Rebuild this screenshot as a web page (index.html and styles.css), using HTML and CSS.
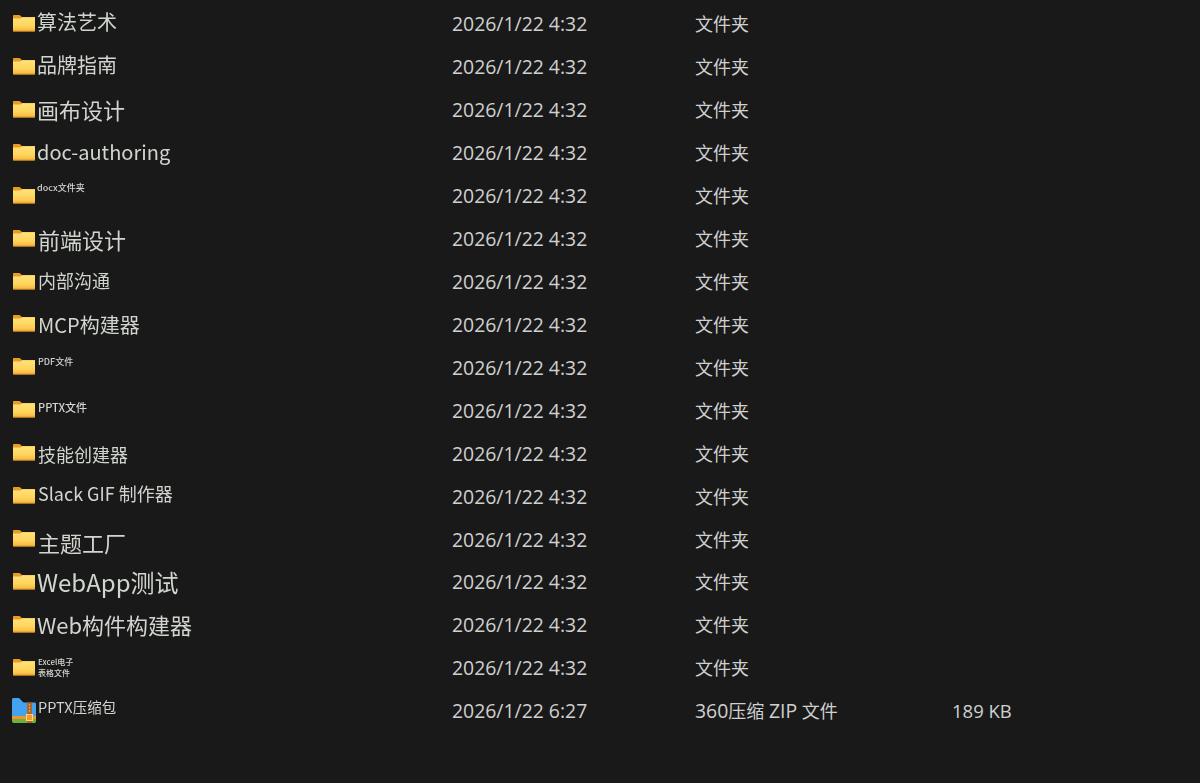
FILE: index.html
```html
<!DOCTYPE html>
<html lang="zh-CN">
<head>
<meta charset="utf-8">
<title>文件列表</title>
<link rel="stylesheet" href="styles.css">
</head>
<body>
<svg class="defs" width="0" height="0" aria-hidden="true">
  <defs>
    <linearGradient id="fg" x1="0" y1="0" x2="0" y2="1">
      <stop offset="0" stop-color="#ffe27a"/>
      <stop offset="0.6" stop-color="#ffd45c"/>
      <stop offset="1" stop-color="#f7b43c"/>
    </linearGradient>
    <symbol id="folder" viewBox="0 0 24 18">
      <path d="M1 2C1 1.400 1.400 1 2 1H7.500L10 3H23V8H1Z" fill="#e89c24"/>
      <path d="M1 4.500H8.500L10.500 3.300H23V16.500C23 17.100 22.600 17.500 22 17.500H2C1.400 17.500 1 17.100 1 16.500Z" fill="url(#fg)"/>
      <path d="M1 16.700H23V17.500H1Z" fill="#c58522"/>
    </symbol>
    <symbol id="zip" viewBox="0 0 24 26">
      <path d="M0 1.500C0 .7.700 0 1.500 0H7L11.500 4.500H22.500C23.400 4.500 24 5.200 24 6V18H0Z" fill="#43a3ef"/>
      <path d="M0 18H24V21H0Z" fill="#f0962c"/>
      <path d="M0 21H24V23C24 24.300 23.300 25 22.500 25H1.500C.7 25 0 24.300 0 23Z" fill="#6fb13c"/>
      <path d="M15 4.500H20V25H15Z" fill="#b0652a"/>
      <path d="M17.500 6v1.500M17.500 9v1.500M17.500 12v1.500" stroke="#f0b050" stroke-width="1.200"/>
      <rect x="14.500" y="16.500" width="6" height="6" fill="#f29a30" stroke="#ffd878" stroke-width="1"/>
    </symbol>
  </defs>
</svg>
<main class="list">
  <div class="row"><div class="name"><svg class="ico"><use href="#folder"/></svg><span class="lbl s20 m8">算法艺术</span></div><div class="date">2026/1/22 4:32</div><div class="type">文件夹</div></div>
  <div class="row"><div class="name"><svg class="ico"><use href="#folder"/></svg><span class="lbl s20 m8">品牌指南</span></div><div class="date">2026/1/22 4:32</div><div class="type">文件夹</div></div>
  <div class="row"><div class="name"><svg class="ico"><use href="#folder"/></svg><span class="lbl s22 m8">画布设计</span></div><div class="date">2026/1/22 4:32</div><div class="type">文件夹</div></div>
  <div class="row"><div class="name"><svg class="ico"><use href="#folder"/></svg><span class="lbl s20 m9">doc-authoring</span></div><div class="date">2026/1/22 4:32</div><div class="type">文件夹</div></div>
  <div class="row"><div class="name"><svg class="ico"><use href="#folder"/></svg><span class="lbl s9 m8">docx文件夹</span></div><div class="date">2026/1/22 4:32</div><div class="type">文件夹</div></div>
  <div class="row"><div class="name"><svg class="ico"><use href="#folder"/></svg><span class="lbl s22 m9 n1">前端设计</span></div><div class="date">2026/1/22 4:32</div><div class="type">文件夹</div></div>
  <div class="row"><div class="name"><svg class="ico"><use href="#folder"/></svg><span class="lbl s18 m9 n1">内部沟通</span></div><div class="date">2026/1/22 4:32</div><div class="type">文件夹</div></div>
  <div class="row"><div class="name"><svg class="ico"><use href="#folder"/></svg><span class="lbl s20 m11 n1">MCP构建器</span></div><div class="date">2026/1/22 4:32</div><div class="type">文件夹</div></div>
  <div class="row"><div class="name"><svg class="ico"><use href="#folder"/></svg><span class="lbl s9 m11 n1">PDF文件</span></div><div class="date">2026/1/22 4:32</div><div class="type">文件夹</div></div>
  <div class="row"><div class="name"><svg class="ico"><use href="#folder"/></svg><span class="lbl s11 m13 n1">PPTX文件</span></div><div class="date">2026/1/22 4:32</div><div class="type">文件夹</div></div>
  <div class="row"><div class="name"><svg class="ico"><use href="#folder"/></svg><span class="lbl s18 m12 n1">技能创建器</span></div><div class="date">2026/1/22 4:32</div><div class="type">文件夹</div></div>
  <div class="row"><div class="name"><svg class="ico"><use href="#folder"/></svg><span class="lbl s18 m8 n1">Slack GIF 制作器</span></div><div class="date">2026/1/22 4:32</div><div class="type">文件夹</div></div>
  <div class="row"><div class="name"><svg class="ico"><use href="#folder"/></svg><span class="lbl s22 m12 n1">主题工厂</span></div><div class="date">2026/1/22 4:32</div><div class="type">文件夹</div></div>
  <div class="row"><div class="name"><svg class="ico"><use href="#folder"/></svg><span class="lbl s24 m8">WebApp测试</span></div><div class="date">2026/1/22 4:32</div><div class="type">文件夹</div></div>
  <div class="row"><div class="name"><svg class="ico"><use href="#folder"/></svg><span class="lbl s22 m8">Web构件构建器</span></div><div class="date">2026/1/22 4:32</div><div class="type">文件夹</div></div>
  <div class="row"><div class="name"><svg class="ico"><use href="#folder"/></svg><span class="lbl s8 m11 n1">Excel电子<br>表格文件</span></div><div class="date">2026/1/22 4:32</div><div class="type">文件夹</div></div>
  <div class="row"><div class="name"><svg class="ico ico-zip"><use href="#zip"/></svg><span class="lbl s15 m9 n1">PPTX压缩包</span></div><div class="date">2026/1/22 6:27</div><div class="type"><span class="latin">360</span>压缩 <span class="latin">ZIP</span> 文件</div><div class="size">189 KB</div></div>
</main>
</body>
</html>
```
FILE: styles.css
```css
html, body { margin: 0; height: 100%; }
body {
  background: #191919;
  color: #d6d6d6;
  font-family: "Noto Sans CJK SC", "Noto Sans", sans-serif;
  overflow: hidden;
}
.defs { display: block; height: 0; }
.list { padding-top: 1px; }
.row {
  display: grid;
  grid-template-columns: 452px 243px 257px 1fr;
  height: 42.93px;
  align-items: center;
  font-size: 18px;
}
.name { display: flex; align-items: flex-start; height: 42.93px; padding-left: 12px; }
.ico { width: 24px; height: 18px; margin-top: 13px; flex: none; }
.ico-zip { height: 26px; margin-top: 10px; }
.lbl { display: block; white-space: nowrap; margin-left: 1px; color: #d0d5ce; filter: blur(.35px); }
.n1 { margin-left: 2px; }
.s8 { font-size: 8px; line-height: 11px; font-weight: 500; }
.s9 { font-size: 9px; line-height: 14px; font-weight: 500; }
.s11 { font-size: 11px; line-height: 14px; font-weight: 500; }
.s15 { font-size: 14.5px; line-height: 20px; }
.s18 { font-size: 18px; line-height: 24px; }
.s20 { font-size: 20px; line-height: 26px; }
.s22 { font-size: 22px; line-height: 28px; }
.s24 { font-size: 24px; line-height: 30px; }
.m8 { margin-top: 8px; }
.m9 { margin-top: 9px; }
.m11 { margin-top: 11px; }
.m12 { margin-top: 12px; }
.m13 { margin-top: 13px; }
.date, .type, .size {
  color: #cfd0d0;
  white-space: nowrap;
  font-family: "Open Sans", "Noto Sans CJK SC", sans-serif;
  padding-top: 3px;
}
.type { padding-top: 2px; }
.date, .latin { font-size: 19.4px; }
.size { font-size: 18.500px; }
```
